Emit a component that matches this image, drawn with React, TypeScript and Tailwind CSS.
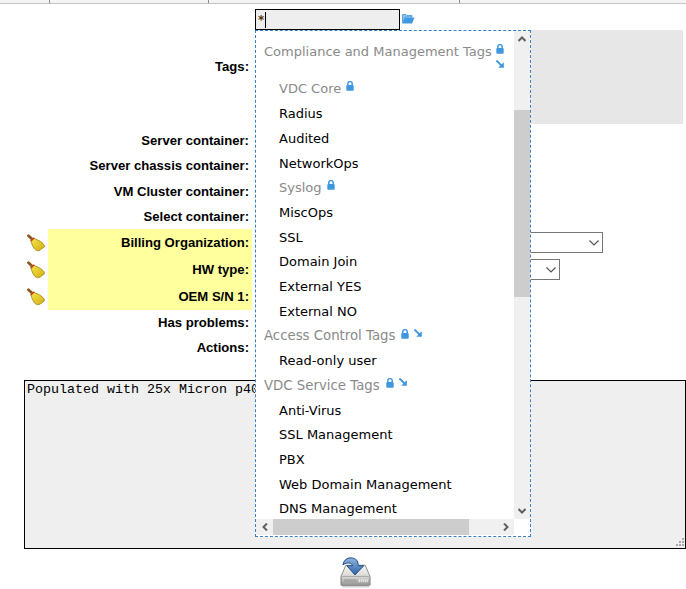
import type { ReactNode } from 'react';

const rows = [
  { label: 'Server container:', h: 25 },
  { label: 'Server chassis container:', h: 26 },
  { label: 'VM Cluster container:', h: 25 },
  { label: 'Select container:', h: 25 },
];

const yellowRows = [
  { label: 'Billing Organization:', select: 'w-[348px]' },
  { label: 'HW type:', select: 'w-[305px]' },
  { label: 'OEM S/N 1:', select: '' },
];

type Item = { text: string; kind: 'head' | 'sub' | 'leaf'; arrow?: boolean };

const items: Item[] = [
  { text: 'VDC Core', kind: 'sub' },
  { text: 'Radius', kind: 'leaf' },
  { text: 'Audited', kind: 'leaf' },
  { text: 'NetworkOps', kind: 'leaf' },
  { text: 'Syslog', kind: 'sub' },
  { text: 'MiscOps', kind: 'leaf' },
  { text: 'SSL', kind: 'leaf' },
  { text: 'Domain Join', kind: 'leaf' },
  { text: 'External YES', kind: 'leaf' },
  { text: 'External NO', kind: 'leaf' },
  { text: 'Access Control Tags', kind: 'head', arrow: true },
  { text: 'Read-only user', kind: 'leaf' },
  { text: 'VDC Service Tags', kind: 'head', arrow: true },
  { text: 'Anti-Virus', kind: 'leaf' },
  { text: 'SSL Management', kind: 'leaf' },
  { text: 'PBX', kind: 'leaf' },
  { text: 'Web Domain Management', kind: 'leaf' },
  { text: 'DNS Management', kind: 'leaf' },
];

function Lock() {
  return (
    <svg width="8" height="10" viewBox="0 0 8 10" className="shrink-0">
      <path d="M1.8 4.5V2.8a2.2 2.2 0 0 1 4.4 0v1.7" fill="none" stroke="#3f97e0" strokeWidth="1.5" />
      <rect x="0.3" y="4" width="7.4" height="5.8" rx="1" fill="#3f97e0" />
    </svg>
  );
}

function Arrow() {
  return (
    <svg width="8" height="8" viewBox="0 0 8 8" className="shrink-0">
      <path d="M0.5 0.5 L5.5 5.5" stroke="#3f97e0" strokeWidth="1.8" />
      <path d="M7.8 2.2 V7.8 H2.2 Z" fill="#3f97e0" />
    </svg>
  );
}

function Broom({ id }: { id: string }) {
  return (
    <svg width="18" height="18" viewBox="0 0 18 18">
      <defs>
        <linearGradient id={id} x1="0" y1="0" x2="1" y2="1">
          <stop offset="0" stopColor="#f7e84a" />
          <stop offset="1" stopColor="#d2ac12" />
        </linearGradient>
      </defs>
      <path d="M1.5 1.8 L6 6" stroke="#8a5a20" strokeWidth="2.8" strokeLinecap="round" />
      <path d="M6.6 3.8 C9 6 13 6 16 9.6 C17.6 11.4 17.8 12.6 17.2 13.2 C15.8 13.6 15.2 14 14.8 15 C13.8 15.4 13.2 16 11.8 16.6 C10 17 8.4 16 7.2 14.4 C5.4 12 5 10 3.8 7 Z" fill={`url(#${id})`} stroke="#9a8414" strokeWidth="0.8" />
      <path d="M3.8 7 L7 4" stroke="#c8391f" strokeWidth="1.6" />
    </svg>
  );
}

function SaveIcon() {
  return (
    <svg width="31" height="31" viewBox="0 0 32 32">
      <defs>
        <linearGradient id="box" x1="0" y1="0" x2="0" y2="1">
          <stop offset="0" stopColor="#f6f6f4" />
          <stop offset="1" stopColor="#c4c4c1" />
        </linearGradient>
        <linearGradient id="front" x1="0" y1="0" x2="0" y2="1">
          <stop offset="0" stopColor="#dcdcda" />
          <stop offset="1" stopColor="#8f908d" />
        </linearGradient>
        <linearGradient id="arrow" x1="0" y1="0" x2="0" y2="1">
          <stop offset="0" stopColor="#8fb3da" />
          <stop offset="1" stopColor="#2f64a8" />
        </linearGradient>
      </defs>
      <path d="M6 8.5 H26 L31 20 V29 H1 V20 Z" fill="url(#box)" stroke="#8b8c89" strokeWidth="1" />
      <rect x="1.5" y="20" width="29" height="9.5" rx="1" fill="url(#front)" stroke="#7f807d" strokeWidth="0.6" />
      <rect x="4" y="23" width="13" height="3" fill="#a5a6a3" />
      <path d="M20 23v3M22 23v3M24 23v3M26 23v3M28 23v3" stroke="#f1f1ef" strokeWidth="1" />
      <path d="M3 8 C4 0.5 13 -1.5 18 4 L19 9 H24.5 L15.5 18.5 L7 9 H13 C12 6 8 5 3 8 Z" fill="url(#arrow)" stroke="#204a87" strokeWidth="1" />
      <rect x="2" y="30" width="28" height="1.5" fill="#cfcfcf" />
    </svg>
  );
}

function Label({ children }: { children: ReactNode }) {
  return <span className="block text-right font-bold text-[13.1px] leading-none text-black">{children}</span>;
}

function SelectBox({ width }: { width: string }) {
  return (
    <div className={`${width} h-[21px] border border-[#767676] bg-white flex items-center justify-end pr-[3px]`}>
      <svg width="10" height="6" viewBox="0 0 10 6">
        <path d="M0.5 0.5 L5 5 L9.5 0.5" fill="none" stroke="#555" strokeWidth="1.2" />
      </svg>
    </div>
  );
}

function Chevron({ d }: { d: string }) {
  return (
    <svg width="8" height="6" viewBox="0 0 8 6">
      <path d={d} fill="none" stroke="#606060" strokeWidth="2" />
    </svg>
  );
}

function TagDropdown() {
  return (
    <div className="absolute left-[255px] top-[30px] w-[276px] h-[507px] border border-dashed border-[#3b80c4] bg-white flex flex-col font-['DejaVu_Sans',sans-serif] text-[13px] z-10">
      <div className="flex h-[488px]">
        <div className="flex-1 overflow-hidden pl-2 pt-[11px]">
          <div className="flex items-start gap-1 h-[35px] leading-[20px] text-[#8a8a8a]">
            <span className="whitespace-nowrap">Compliance and Management Tags</span>
            <div className="flex flex-col items-end gap-[6px] mt-[2px]">
              <Lock />
              <Arrow />
            </div>
          </div>
          {items.map((item) => (
            <div
              key={item.text}
              className={`flex items-center gap-[5px] h-[24.7px] whitespace-nowrap ${item.kind === 'head' ? 'text-[13.3px] gap-[6px]' : 'pl-[15px]'} ${item.kind === 'leaf' ? 'text-black' : 'text-[#8a8a8a]'} ${item.kind === 'sub' ? 'pb-[1px]' : ''}`}
            >
              <span>{item.text}</span>
              {item.kind !== 'leaf' && (
                <span className="flex gap-[5px] -mt-[5px]">
                  <Lock />
                  {item.arrow && <Arrow />}
                </span>
              )}
            </div>
          ))}
        </div>
        <div className="w-[16px] bg-[#f0f0f0] flex flex-col">
          <div className="h-[16px] flex items-center justify-center">
            <Chevron d="M0.5 5 L4 1.5 L7.5 5" />
          </div>
          <div className="h-[63px]" />
          <div className="h-[187px] bg-[#cdcdcd]" />
          <div className="flex-1" />
          <div className="h-[16px] flex items-center justify-center">
            <Chevron d="M0.5 1 L4 4.5 L7.5 1" />
          </div>
        </div>
      </div>
      <div className="flex h-[16px] bg-[#f0f0f0] mr-[16px]">
        <div className="w-[17px] flex items-center justify-center">
          <svg width="6" height="8" viewBox="0 0 6 8"><path d="M5 0.5 L1.5 4 L5 7.5" fill="none" stroke="#606060" strokeWidth="2" /></svg>
        </div>
        <div className="w-[196px] bg-[#cdcdcd]" />
        <div className="flex-1 flex items-center justify-end pr-[5px]">
          <svg width="6" height="8" viewBox="0 0 6 8"><path d="M1 0.5 L4.5 4 L1 7.5" fill="none" stroke="#606060" strokeWidth="2" /></svg>
        </div>
      </div>
    </div>
  );
}

export default function App() {
  return (
    <div className="relative w-[686px] h-[589px] overflow-hidden bg-white font-['Liberation_Sans',sans-serif]">
      {/* remains of the row above, cut off by the crop */}
      <div className="flex h-[4px] border-b border-[#c4c4c4] bg-[#f4f4f4]">
        <div className="w-[50px] border-r border-[#8a8a8a]" />
        <div className="w-[159px] border-r border-[#8a8a8a]" />
        <div className="w-[251px] border-r border-[#8a8a8a]" />
      </div>

      {/* tag input row */}
      <div className="flex items-center h-[21px] mt-[5px] pl-[255px]">
        <div className="w-[145px] h-[21px] border border-black bg-[#eeeeee] flex items-center pl-[2px] font-['DejaVu_Sans',sans-serif] font-bold text-[12px] leading-none">
          <span className="text-[#5a3208]">*</span>
          <span className="w-px h-[16px] bg-black ml-[1px]" />
        </div>
        <svg width="13" height="11" viewBox="0 0 13 11" className="ml-[2px] mt-[-2px]">
          <path d="M0.5 10 V1.5 H4 L5 2.5 H10 V4 H3 Z" fill="#8cc4ee" stroke="#3f97e0" strokeWidth="0.8" />
          <path d="M0.5 10.5 L3 4.5 H12.5 L10 10.5 Z" fill="#3f97e0" />
        </svg>
      </div>

      {/* form */}
      <div>
        <div className="flex items-center h-[94px]">
          <div className="w-[249px] shrink-0 mt-[-20px]"><Label>Tags:</Label></div>
          <div className="ml-[6px] w-[428px] h-[94px] bg-[#e7e7e7]" />
        </div>
        <div className="h-[4px]" />
        {rows.map((row) => (
          <div key={row.label} className="flex items-center w-[249px]" style={{ height: row.h }}>
            <div className="w-full"><Label>{row.label}</Label></div>
          </div>
        ))}
        <div className="flex flex-col">
          {yellowRows.map((row, i) => (
            <div key={row.label} className="flex items-center h-[27px]">
              <div className="w-[24px] shrink-0" />
              <div className="w-[24px] shrink-0 pl-[3px]"><Broom id={`broom${i}`} /></div>
              <div className="w-[204px] h-full bg-[#ffff9e] flex items-center justify-end pr-[3px]">
                <Label>{row.label}</Label>
              </div>
              {row.select && (
                <div className="ml-[3px]"><SelectBox width={row.select} /></div>
              )}
            </div>
          ))}
        </div>
        <div className="flex items-center w-[249px] h-[25px]"><div className="w-full"><Label>Has problems:</Label></div></div>
        <div className="flex items-center w-[249px] h-[25px]"><div className="w-full"><Label>Actions:</Label></div></div>
      </div>

      {/* comment */}
      <div className="relative mt-[20px] ml-[24px] w-[662px] h-[169px] border border-black bg-[#efefef] pl-[2px] pt-[1px] font-['Liberation_Mono',monospace] text-[13.33px] leading-[15px] text-black">
        Populated with 25x Micron p400
        <svg width="10" height="10" viewBox="0 0 10 10" className="absolute right-[1px] bottom-[1px]">
          <path d="M8 1h2v2H8zM5 4h2v2H5zM8 4h2v2H8zM2 7h2v2H2zM5 7h2v2H5zM8 7h2v2H8z" fill="#a8a8a8" />
        </svg>
      </div>

      <div className="flex justify-center w-[711px] mt-[8px]">
        <SaveIcon />
      </div>

      <TagDropdown />
    </div>
  );
}
